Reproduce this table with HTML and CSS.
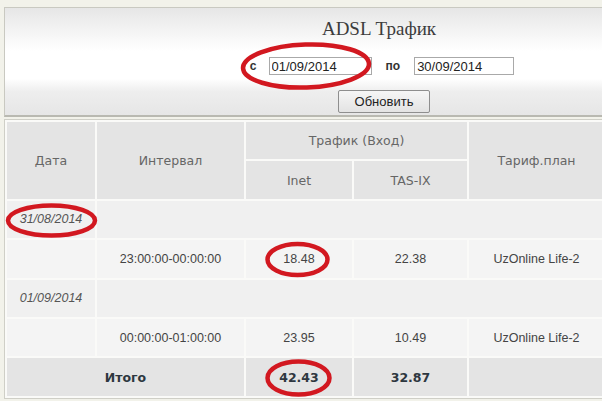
FILE: index.html
```html
<!DOCTYPE html>
<html lang="ru">
<head>
<meta charset="utf-8">
<title>ADSL Трафик</title>
<link rel="stylesheet" href="styles.css">
</head>
<body>
<div class="page">
  <div class="panel">
    <h1 class="title">ADSL Трафик</h1>
    <form class="range">
      <label class="lbl" for="from">с</label>
      <input class="date-in from" id="from" type="text" value="01/09/2014">
      <label class="lbl lbl-to" for="to">по</label>
      <input class="date-in to" id="to" type="text" value="30/09/2014">
    </form>
    <button class="btn" type="button">Обновить</button>
  </div>
  <table class="traffic">
    <colgroup>
      <col class="c-date"><col class="c-int"><col class="c-inet"><col class="c-tas"><col class="c-plan"><col class="c-extra">
    </colgroup>
    <thead>
      <tr>
        <th rowspan="2">Дата</th>
        <th rowspan="2">Интервал</th>
        <th colspan="2">Трафик (Вход)</th>
        <th rowspan="2">Тариф.план</th>
        <th rowspan="2"></th>
      </tr>
      <tr>
        <th>Inet</th>
        <th>TAS-IX</th>
      </tr>
    </thead>
    <tbody>
      <tr class="day"><td class="dt">31/08/2014</td><td colspan="5"></td></tr>
      <tr class="row"><td></td><td>23:00:00-00:00:00</td><td>18.48</td><td>22.38</td><td>UzOnline Life-2</td><td></td></tr>
      <tr class="day"><td class="dt">01/09/2014</td><td colspan="5"></td></tr>
      <tr class="row"><td></td><td>00:00:00-01:00:00</td><td>23.95</td><td>10.49</td><td>UzOnline Life-2</td><td></td></tr>
      <tr class="total"><td colspan="2">Итого</td><td>42.43</td><td>32.87</td><td></td><td></td></tr>
    </tbody>
  </table>
  <svg class="marks" width="602" height="401" viewBox="0 0 602 401" aria-hidden="true">
    <ellipse cx="306" cy="66" rx="63" ry="21.5" transform="rotate(-2 306 66)"/>
    <ellipse cx="51.5" cy="220.5" rx="43.5" ry="15"/>
    <ellipse cx="297.5" cy="259.5" rx="30" ry="15.5"/>
    <ellipse cx="298.5" cy="378" rx="31" ry="16.5"/>
  </svg>
</div>
</body>
</html>
```

FILE: styles.css
```css
html, body {
  margin: 0;
  padding: 0;
  overflow: hidden;
  background: #f2f2ea;
}
.page {
  position: relative;
  width: 756px;
  padding: 7px 0 0 4px;
  font-family: "Liberation Sans", Arial, sans-serif;
}
.panel {
  box-sizing: border-box;
  height: 110px;
  border: 1px solid #c9c9c1;
  border-bottom: 2px solid #b9b9b1;
  background: linear-gradient(#e6e6e6 0%, #fbfbfb 33%, #ffffff 40%, #ffffff 66%, #eeeeee 78%, #e6e6e6 100%);
  display: flex;
  flex-direction: column;
  align-items: center;
  padding-top: 8px;
}
.title {
  margin: 0 6px 0 0;
  font-family: "Liberation Serif", "Times New Roman", serif;
  font-weight: normal;
  font-size: 19px;
  line-height: 26px;
  color: #3c3c3c;
}
.range {
  display: flex;
  align-items: center;
  margin: 15px 0 0 0;
  height: 18px;
}
.lbl {
  font-size: 12px;
  font-weight: bold;
  color: #333;
}
.lbl-to {
  margin: 0 14px 0 14px;
}
.date-in {
  box-sizing: border-box;
  height: 18px;
  padding: 0 2px;
  border: 1px solid #a9a9a9;
  background: #fff;
  font-family: "Liberation Sans", Arial, sans-serif;
  font-size: 13px;
  color: #222;
}
.from {
  width: 103px;
  margin-left: 12px;
}
.to {
  width: 100px;
}
.btn {
  box-sizing: border-box;
  margin-top: 15px;
  margin-left: 4px;
  width: 92px;
  height: 23px;
  padding: 0;
  border: 1px solid #8e8e8e;
  border-radius: 2px;
  background: linear-gradient(#f6f6f6, #e3e3e3);
  font-family: "Liberation Sans", Arial, sans-serif;
  font-size: 13px;
  color: #222;
}
.traffic {
  margin-top: 2px;
  width: 756px;
  table-layout: fixed;
  border-collapse: separate;
  border-spacing: 2px;
  border: 1px solid #cfcfc7;
  background: #fafaf8;
}
.c-date { width: 88px; }
.c-int { width: 147px; }
.c-inet { width: 106px; }
.c-tas { width: 113px; }
.c-plan { width: 135px; }
.traffic th,
.traffic td {
  height: 37.4px;
  padding: 0;
  text-align: center;
  vertical-align: middle;
}
.traffic th {
  background: #e4e4e4;
  font-family: "DejaVu Sans", Verdana, sans-serif;
  font-weight: normal;
  font-size: 12.5px;
  color: #666;
}
.traffic td {
  font-size: 12.5px;
  color: #444;
}
.day td {
  background: #f0f0f0;
}
.day .dt {
  font-style: italic;
  color: #555;
}
.row td {
  background: #f4f4f4;
}
.total td {
  background: #e4e4e4;
  font-family: "DejaVu Sans", Verdana, sans-serif;
  font-weight: bold;
  font-size: 12.5px;
  color: #2e3740;
}
.marks {
  position: absolute;
  left: 0;
  top: 0;
  pointer-events: none;
}
.marks ellipse {
  fill: none;
  stroke: #d21820;
  stroke-width: 4.5;
}
```
